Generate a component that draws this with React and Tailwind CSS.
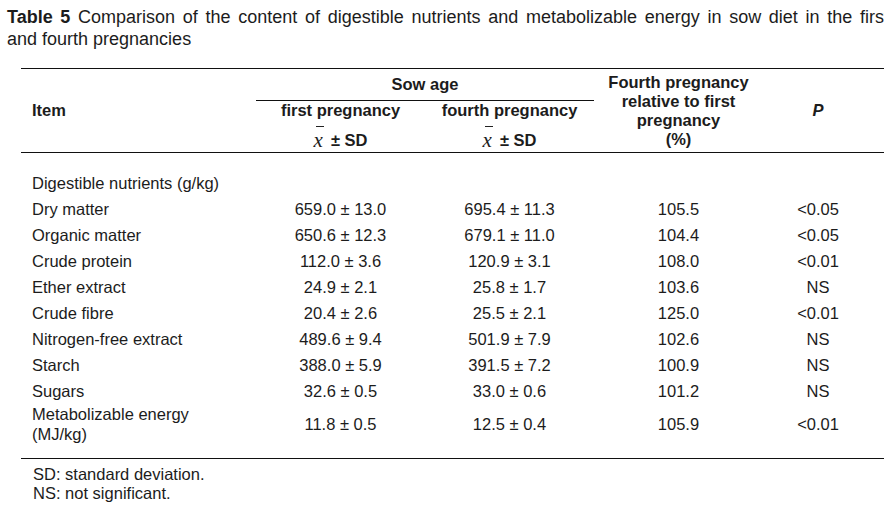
const rows = [
  ['Dry matter', '659.0 ± 13.0', '695.4 ± 11.3', '105.5', '<0.05'],
  ['Organic matter', '650.6 ± 12.3', '679.1 ± 11.0', '104.4', '<0.05'],
  ['Crude protein', '112.0 ± 3.6', '120.9 ± 3.1', '108.0', '<0.01'],
  ['Ether extract', '24.9 ± 2.1', '25.8 ± 1.7', '103.6', 'NS'],
  ['Crude fibre', '20.4 ± 2.6', '25.5 ± 2.1', '125.0', '<0.01'],
  ['Nitrogen-free extract', '489.6 ± 9.4', '501.9 ± 7.9', '102.6', 'NS'],
  ['Starch', '388.0 ± 5.9', '391.5 ± 7.2', '100.9', 'NS'],
  ['Sugars', '32.6 ± 0.5', '33.0 ± 0.6', '101.2', 'NS'],
];

function MeanSD() {
  return (
    <div className="mt-[11px] flex items-center justify-center leading-[19px]">
      <span className="relative inline-block font-['Liberation_Serif',serif] text-[21px] font-normal italic leading-[19px]">
        x
        <span className="absolute left-[2px] top-[-5px] h-px w-[8px] bg-[#222]" />
      </span>
      <span className="ml-[8px]">± SD</span>
    </div>
  );
}

export default function App() {
  return (
    <div className="h-[507px] w-[884px] overflow-hidden bg-white font-['Liberation_Sans',Arial,sans-serif] text-[16.5px] text-[#1c1c1c]">
      {/* Caption */}
      <div className="w-[882px] pl-[7px] pt-[6px] text-[18px] leading-[22px]">
        <p className="w-[882px] text-justify [text-align-last:justify]">
          <b>Table 5</b> Comparison of the content of digestible nutrients and metabolizable energy in sow diet in the first
        </p>
        <p>and fourth pregnancies</p>
      </div>

      <div className="ml-[21px] mt-[18px] w-[863px]">
        {/* Header */}
        <div className="grid grid-cols-[235px_169px_169px_169px_110px] border-y border-[#111] font-bold">
          <div className="row-span-2 flex items-center pl-[11px]">Item</div>
          <div className="col-span-2 flex h-[32px] items-center justify-center border-b border-[#111]">Sow age</div>
          <div className="row-span-2 flex items-center justify-center text-center leading-[19px]">
            <div>
              Fourth pregnancy
              <br />
              relative to first
              <br />
              pregnancy
              <br />
              (%)
            </div>
          </div>
          <div className="row-span-2 flex items-center justify-center italic">P</div>
          <div className="pb-[2px] text-center">
            <div className="leading-[19px]">first pregnancy</div>
            <MeanSD />
          </div>
          <div className="pb-[2px] text-center">
            <div className="leading-[19px]">fourth pregnancy</div>
            <MeanSD />
          </div>
        </div>

        {/* Body */}
        <div className="border-b border-[#111] pb-[14px] pt-[17px]">
          <div className="flex h-[26px] items-center pl-[11px]">Digestible nutrients (g/kg)</div>
          {rows.map((r) => (
            <div key={r[0]} className="grid h-[26px] grid-cols-[235px_169px_169px_169px_110px] items-center">
              <div className="pl-[11px]">{r[0]}</div>
              <div className="text-center">{r[1]}</div>
              <div className="text-center">{r[2]}</div>
              <div className="text-center">{r[3]}</div>
              <div className="text-center">{r[4]}</div>
            </div>
          ))}
          <div className="grid h-[40px] grid-cols-[235px_169px_169px_169px_110px] items-center leading-[20px]">
            <div className="pl-[11px]">
              Metabolizable energy
              <br />
              (MJ/kg)
            </div>
            <div className="text-center">11.8 ± 0.5</div>
            <div className="text-center">12.5 ± 0.4</div>
            <div className="text-center">105.9</div>
            <div className="text-center">&lt;0.01</div>
          </div>
        </div>

        {/* Notes */}
        <div className="pl-[12px] pt-[6px] leading-[19px]">
          <p>SD: standard deviation.</p>
          <p>NS: not significant.</p>
        </div>
      </div>
    </div>
  );
}
